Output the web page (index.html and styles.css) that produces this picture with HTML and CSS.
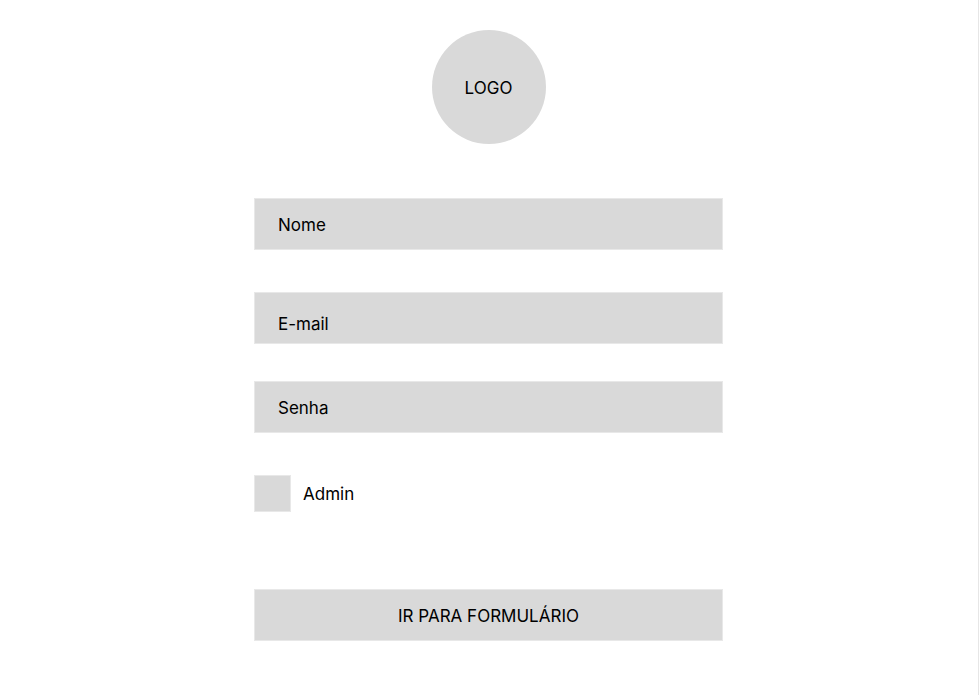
FILE: index.html
```html
<!DOCTYPE html>
<html lang="pt-BR">
<head>
<meta charset="utf-8">
<meta name="viewport" content="width=device-width, initial-scale=1">
<title>Cadastro</title>
<link rel="stylesheet" href="styles.css">
</head>
<body>
<main class="page">
  <div class="logo">LOGO</div>
  <form class="form">
    <input class="field" type="text" placeholder="Nome" aria-label="Nome">
    <input class="field field-email" type="email" placeholder="E-mail" aria-label="E-mail">
    <input class="field field-password" type="password" placeholder="Senha" aria-label="Senha">
    <label class="check"><input class="box" type="checkbox"><span>Admin</span></label>
    <button class="submit" type="button">IR PARA FORMULÁRIO</button>
  </form>
</main>
</body>
</html>
```
FILE: styles.css
```css
* {
  box-sizing: border-box;
}

body {
  margin: 0;
  background: #fff;
  color: #000;
  font: 17px/20px Inter, sans-serif;
}

.page {
  display: flex;
  flex-direction: column;
  align-items: center;
  min-height: 100vh;
  padding: 30px 25px 30px 24px;
  border-right: 1px solid #e6e6e6;
}

.logo {
  display: flex;
  align-items: center;
  justify-content: center;
  width: 114px;
  height: 114px;
  padding-top: 1px;
  border-radius: 50%;
  background: #d9d9d9;
}

.form {
  display: flex;
  flex-direction: column;
  width: 100%;
  max-width: 469px;
  margin-top: 54px;
}

.field,
.submit {
  width: 100%;
  height: 52px;
  margin: 0;
  padding: 1px 23px 0;
  border: 1px solid #e8e8e8;
  border-radius: 0;
  background: #d9d9d9;
  color: #000;
  font: inherit;
}

.field::placeholder {
  color: #000;
  opacity: 1;
}

.field-email {
  margin-top: 42px;
  padding-top: 12px;
}

.field-password {
  margin-top: 37px;
}

.check {
  display: flex;
  align-items: center;
  align-self: flex-start;
  gap: 12px;
  margin-top: 42px;
}

.box {
  appearance: none;
  width: 37px;
  height: 37px;
  margin: 0;
  border: 1px solid #e8e8e8;
  background: #d9d9d9;
}

.box:checked {
  background: #777;
}

.submit {
  margin-top: 77px;
}
```
